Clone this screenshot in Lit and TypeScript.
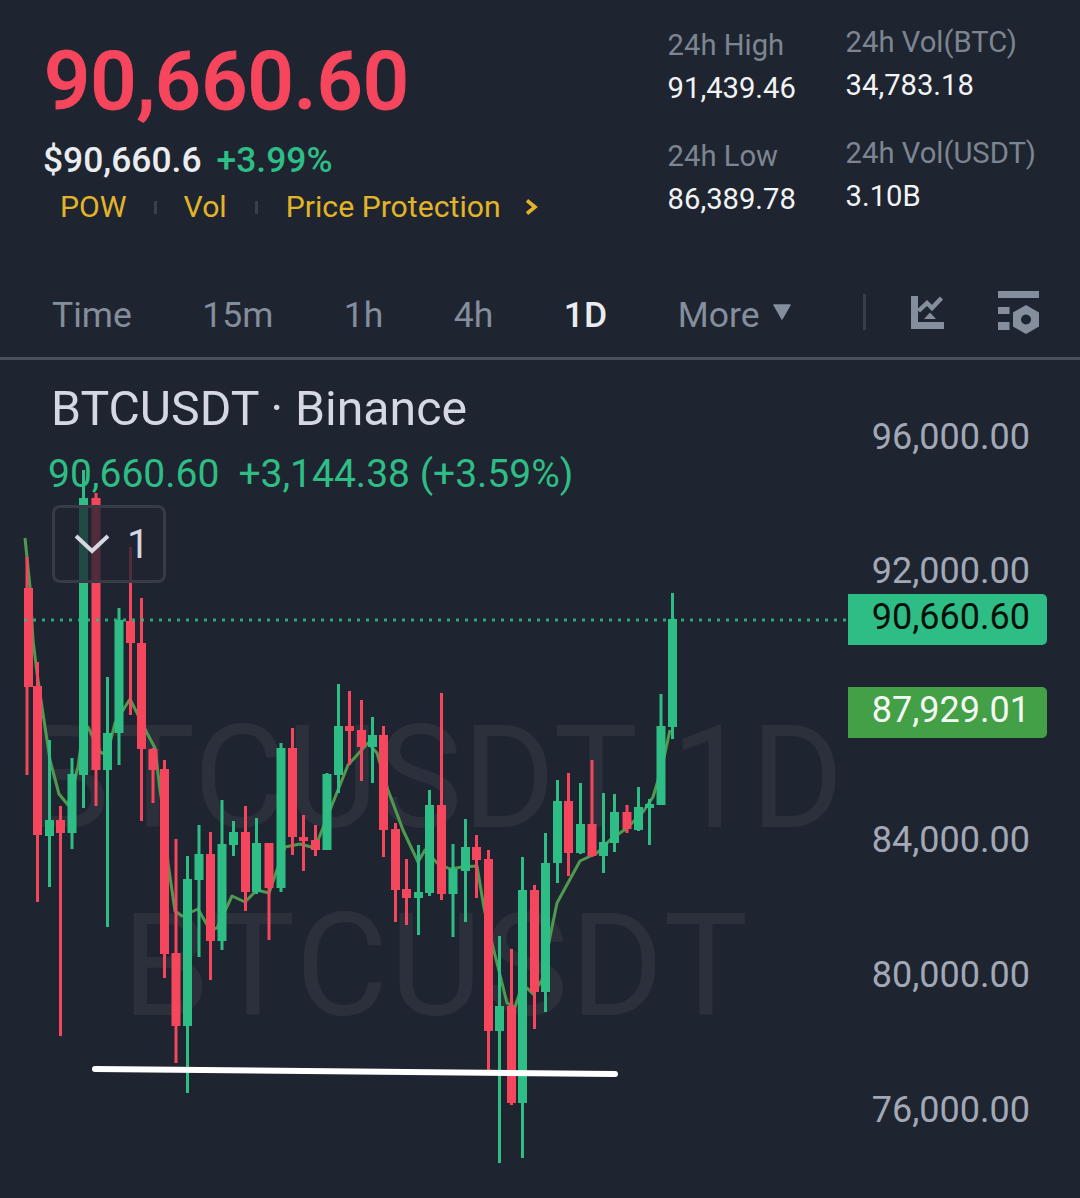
import { LitElement, css, html, svg } from 'lit';
import { customElement } from 'lit/decorators.js';

// x, wick high, body top, body bottom, wick low, colour
type Candle = [number, number, number, number, number, 'r' | 'g'];

const CANDLES: Candle[] = [
  [27, 557, 588, 687, 775, 'r'], [37.5, 662, 686, 835, 902, 'r'], [49.5, 740, 820, 836, 887, 'g'],
  [60.5, 806, 820, 833, 1036, 'r'], [72, 758, 774, 833, 849, 'g'], [83.5, 470, 498, 775, 808, 'g'],
  [96, 493, 498, 770, 806, 'r'], [107.5, 677, 733, 770, 927, 'g'], [119, 608, 620, 733, 765, 'g'],
  [130.5, 547, 621, 643, 715, 'r'], [141.5, 598, 643, 749, 821, 'r'], [153, 748, 749, 770, 803, 'r'],
  [164.5, 760, 769, 954, 978, 'r'], [176, 839, 953, 1026, 1063, 'r'], [187.5, 856, 879, 1026, 1093, 'g'],
  [199, 825, 854, 880, 957, 'g'], [210.5, 832, 854, 941, 980, 'r'], [222, 800, 844, 941, 950, 'g'],
  [233.5, 821, 832, 845, 856, 'g'], [245.5, 806, 832, 892, 911, 'r'], [256.5, 818, 843, 892, 894, 'g'],
  [269, 843, 843, 888, 940, 'r'], [281, 743, 748, 888, 892, 'g'], [292.5, 728, 748, 837, 855, 'r'],
  [303.5, 815, 837, 841, 871, 'r'], [315.5, 825, 840, 850, 856, 'r'], [327, 773, 774, 850, 850, 'g'],
  [338.5, 684, 726, 775, 793, 'g'], [349.5, 691, 726, 731, 765, 'r'], [361.5, 700, 730, 747, 781, 'r'],
  [372.5, 717, 735, 747, 783, 'g'], [383.5, 726, 735, 830, 857, 'r'], [395.5, 823, 829, 890, 922, 'r'],
  [406.5, 859, 889, 898, 925, 'r'], [418.5, 845, 892, 898, 935, 'g'], [429.5, 790, 805, 893, 896, 'g'],
  [441.5, 693, 805, 894, 900, 'r'], [453, 844, 869, 894, 937, 'g'], [465.5, 819, 847, 871, 922, 'g'],
  [476.5, 835, 847, 860, 898, 'r'], [488.5, 850, 859, 1031, 1073, 'r'], [499.5, 936, 1006, 1031, 1163, 'g'],
  [511.5, 949, 1006, 1103, 1105, 'r'], [522.5, 857, 890, 1103, 1158, 'g'], [534.5, 885, 890, 992, 1029, 'r'],
  [545.5, 833, 863, 992, 1012, 'g'], [557.5, 780, 801, 863, 883, 'g'], [568.5, 773, 801, 853, 876, 'r'],
  [580.5, 783, 824, 853, 854, 'g'], [592, 760, 824, 856, 857, 'r'], [603.5, 793, 842, 856, 873, 'g'],
  [614.5, 794, 812, 843, 852, 'g'], [627, 805, 812, 829, 833, 'r'], [638.5, 787, 807, 830, 831, 'g'],
  [649.5, 799, 804, 808, 845, 'g'], [661, 694, 726, 805, 805, 'g'], [672.5, 593, 619, 727, 739, 'g'],
];

const MA_LINE =
  '25,538 30,587 33,640 37,673 42,707 50,760 59,794 68,805 78,767 83,730 88,727 100,752 107,755 115,723 130,699 ' +
  '147,733 155,748 160,790 165,823 168,863 175,911 182,916 198,909 210,930 217,928 232,896 245,902 257,890 269,893 ' +
  '285,847 300,844 315,848 330,810 348,765 368,743 377,753 388,790 403,830 418,862 425,850 437,863 450,869 462,867 ' +
  '477,866 484,908 493,947 507,1003 515,1007 520,992 527,988 533,994 542,980 550,937 557,903 580,861 597,853 610,840 ' +
  '627,828 643,812 653,797 662,767 670,730';

const AXIS = [
  { label: '96,000.00', y: 437 }, { label: '92,000.00', y: 571 }, { label: '84,000.00', y: 840 },
  { label: '80,000.00', y: 975 }, { label: '76,000.00', y: 1110 },
];

const TABS = ['Time', '15m', '1h', '4h', '1D'];

@customElement('app-root')
export class AppRoot extends LitElement {
  static override styles = css`
    :host {
      display: block;
      width: 1080px;
      height: 1198px;
      background: #1f2530;
      color: #eaecef;
      font-family: Roboto, 'Liberation Sans', sans-serif;
      overflow: hidden;
    }
    .page {
      display: flex;
      flex-direction: column;
      height: 100%;
    }
    .header {
      display: flex;
      justify-content: space-between;
      height: 270px;
      padding: 0 44px 0 43px;
      box-sizing: border-box;
    }
    .price {
      font-size: 81.500px;
      line-height: 96px;
      margin-top: 33px;
      margin-left: 1px;
      font-weight: 500;
      color: #f6465d;
      -webkit-text-stroke: 1px #f6465d;
    }
    .sub {
      display: flex;
      gap: 15px;
      font-size: 35.400px;
      line-height: 40px;
      margin-top: 11px;
    }
    .sub .usd { font-weight: 500; }
    .sub .pct { font-weight: 500; color: #2ebd85; }
    .tags {
      display: flex;
      align-items: center;
      margin: 9px 0 0 17px;
      font-size: 30.200px;
      line-height: 36px;
      color: #e2b42a;
    }
    .tag-sep {
      width: 3px;
      height: 13px;
      background: #3a404b;
    }
    .tag-sep.a { margin: 0 27px 0 27px; }
    .tag-sep.b { margin: 0 28px 0 28px; }
    .tags svg { margin-left: 24px; }
    .stats {
      display: grid;
      grid-template-columns: 178px auto;
      row-gap: 32px;
      margin-top: 27px;
      align-content: start;
    }
    .stat {
      display: flex;
      flex-direction: column;
      gap: 7px;
      font-size: 29.200px;
      line-height: 36px;
    }
    .stat.up { margin-top: -3px; margin-bottom: 3px; }
    .stat .k { color: #7d8592; }
    .stat .v { color: #f2f3f5; }

    .toolbar {
      display: flex;
      align-items: center;
      height: 90px;
      padding: 3px 0 0 52px;
      box-sizing: border-box;
      border-bottom: 3px solid #4a505b;
      font-size: 35.500px;
      color: #848e9c;
    }
    .tabs {
      display: flex;
      align-items: center;
      gap: 70.500px;
      width: 784px;
      flex: none;
    }
    .tab.on { color: #eaecef; font-weight: 500; }
    .more {
      display: flex;
      align-items: center;
      gap: 13px;
    }
    .more svg { margin-top: -6px; }
    .bar {
      width: 3px;
      height: 36px;
      background: #383e49;
      margin: -6px 0 0 27px;
      flex: none;
    }
    .toolbar svg { display: block; flex: none; }
    .ic-chart { margin-left: 45px; margin-top: -6px; }
    .ic-set { margin-left: 54px; margin-top: -6px; }

    .chart {
      position: relative;
      flex: 1;
      overflow: hidden;
    }
    .plot {
      position: absolute;
      inset: 0;
      display: block;
    }
    .legend {
      position: absolute;
      left: 48px;
      top: 24px;
      display: flex;
      flex-direction: column;
      align-items: flex-start;
    }
    .title {
      font-size: 48.200px;
      line-height: 50px;
      color: #d5d8e2;
      margin-left: 3px;
    }
    .quote {
      display: flex;
      gap: 19px;
      font-size: 39px;
      line-height: 44px;
      margin-top: 18px;
      color: #2ebd85;
    }
    .fold {
      display: flex;
      align-items: center;
      gap: 17px;
      box-sizing: border-box;
      width: 114px;
      height: 78px;
      margin: 9px 0 0 4px;
      padding-left: 19px;
      border: 3px solid #363b46;
      border-radius: 8px;
      background: rgba(31, 37, 48, 0.76);
      font-size: 40px;
      color: #d5d8e2;
    }
    .tick {
      position: absolute;
      right: 50px;
      font-size: 36px;
      line-height: 44px;
      color: #a3a8b6;
    }
    .badge {
      position: absolute;
      left: 848px;
      width: 199px;
      height: 51px;
      box-sizing: border-box;
      padding-right: 17px;
      text-align: right;
      border-radius: 0 5px 5px 0;
      font-size: 36px;
      line-height: 46px;
    }
    .badge.last { top: 234px; background: #2ebd85; color: #05100b; }
    .badge.ma { top: 327px; background: #43a047; color: #f4f8f4; }
  `;

  private renderCandles() {
    return CANDLES.map(([x, hi, top, bot, lo, dir]) => {
      const col = dir === 'r' ? '#f6465d' : '#2ebd85';
      return svg`
        <rect x=${x - 1.5} y=${hi} width="3" height=${lo - hi} fill=${col}></rect>
        <rect x=${Math.max(x - 4.5, 24)} y=${top} width="9" height=${bot - top} fill=${col}></rect>`;
    });
  }

  override render() {
    return html`
      <div class="page">
        <div class="header">
          <div>
            <div class="price">90,660.60</div>
            <div class="sub"><span class="usd">$90,660.6</span><span class="pct">+3.99%</span></div>
            <div class="tags">
              <span>POW</span><i class="tag-sep a"></i><span>Vol</span><i class="tag-sep b"></i><span>Price Protection</span>
              <svg width="14" height="18" viewBox="0 0 14 18"><path d="M2 2.500 10 9 2 15.500" fill="none" stroke="#e2b42a" stroke-width="3.600"/></svg>
            </div>
          </div>
          <div class="stats">
            <div class="stat"><span class="k">24h High</span><span class="v">91,439.46</span></div>
            <div class="stat up"><span class="k">24h Vol(BTC)</span><span class="v">34,783.18</span></div>
            <div class="stat"><span class="k">24h Low</span><span class="v">86,389.78</span></div>
            <div class="stat up"><span class="k">24h Vol(USDT)</span><span class="v">3.10B</span></div>
          </div>
        </div>

        <div class="toolbar">
          <div class="tabs">
            ${TABS.map((t) => html`<span class="tab ${t === '1D' ? 'on' : ''}">${t}</span>`)}
            <span class="more">More
              <svg width="20" height="16" viewBox="0 0 20 16"><path d="M2 1H18L10 15Z" fill="#848e9c" stroke="#848e9c" stroke-width="1.500" stroke-linejoin="round"/></svg>
            </span>
          </div>
          <i class="bar"></i>
          <svg class="ic-chart" width="33" height="33" viewBox="0 0 33 33" fill="#848e9c">
            <path d="M0 0H7V26H33V33H0Z"/>
            <path d="M7.500 15 16 7l5 5 9.500-10" fill="none" stroke="#848e9c" stroke-width="4.400"/>
            <path d="M13 23 19 16.500 25 23Z"/>
          </svg>
          <svg class="ic-set" width="41" height="43" viewBox="0 0 41 43" fill="#848e9c">
            <rect x="0" y="0" width="41" height="7"/>
            <rect x="0" y="16" width="11.500" height="7"/>
            <rect x="0" y="31" width="11.500" height="8"/>
            <path fill-rule="evenodd" d="M28 14 41 21.500V35.500L28 43 15 35.500V21.500ZM28 23.500a5 5 0 1 0 .01 0Z"/>
          </svg>
        </div>

        <div class="chart">
          <svg class="plot" viewBox="0 360 1080 838">
            <g font-family="Roboto, 'Liberation Sans', sans-serif" fill="#2b303b" font-size="142">
              <text x="24" y="827">BTCUSDT 1D</text>
              <text x="122" y="1015" letter-spacing="2">BTCUSDT</text>
            </g>
            <polyline points=${MA_LINE} fill="none" stroke="#4f9a50" stroke-width="3" stroke-linejoin="round"></polyline>
            ${this.renderCandles()}
            <line x1="24" y1="620" x2="848" y2="620" stroke="#2ebd85" stroke-opacity="0.85" stroke-width="3" stroke-dasharray="3 6"></line>
            <path d="M95 1069 615 1074" stroke="#fff" stroke-width="6" stroke-linecap="round" fill="none"></path>
          </svg>

          <div class="legend">
            <div class="title">BTCUSDT · Binance</div>
            <div class="quote"><span>90,660.60</span><span>+3,144.38 (+3.59%)</span></div>
            <div class="fold">
              <svg width="36" height="22" viewBox="0 0 36 22"><path d="M2 3 18 18 34 3" fill="none" stroke="#d5d8e2" stroke-width="4"/></svg>
              <span>1</span>
            </div>
          </div>

          ${AXIS.map((a) => html`<div class="tick" style="top:${a.y - 360 - 22}px">${a.label}</div>`)}
          <div class="badge last">90,660.60</div>
          <div class="badge ma">87,929.01</div>
        </div>
      </div>
    `;
  }
}
